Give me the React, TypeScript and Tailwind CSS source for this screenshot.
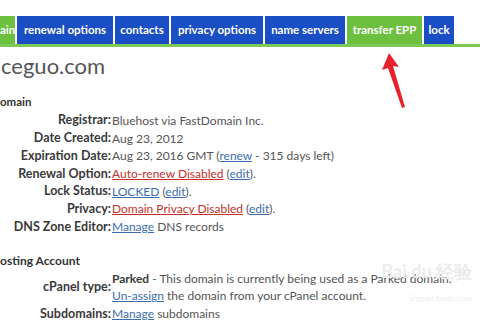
import React from "react";

const tabs: { label: string; green?: boolean; w: string }[] = [
  { label: "ain", green: true, w: "w-[15px]" },
  { label: "renewal options", w: "w-[96px]" },
  { label: "contacts", w: "w-[54px]" },
  { label: "privacy options", w: "w-[92px]" },
  { label: "name servers", w: "w-[80px]" },
  { label: "transfer EPP", green: true, w: "w-[75px]" },
  { label: "lock", w: "w-[30px]" },
];

function Row({ label, children }: { label: string; children: React.ReactNode }) {
  return (
    <div className="flex h-[17.7px] items-center">
      <div className="w-[111px] shrink-0 text-right font-bold text-[#3a3a3a] text-[12.5px]">{label}:</div>
      <div className="pl-[1px] text-[#555] text-[12px] whitespace-nowrap">{children}</div>
    </div>
  );
}

const blueLink = "text-[#3b6db3] underline";
const redLink = "text-[#c9302c] underline";

export default function App() {
  return (
    <div className="relative w-[480px] h-[320px] overflow-hidden bg-white" style={{ fontFamily: "Lato, 'Open Sans', sans-serif" }}>
      <div className="pt-[16px]">
        <div className="flex h-[28px] gap-[2px]">
          {tabs.map((t) => (
            <div
              key={t.label}
              className={`${t.w} shrink-0 flex items-center justify-center overflow-hidden whitespace-nowrap text-white font-bold text-[11.5px] ${t.green ? "bg-[#6cbf3f]" : "bg-[#1a4ec4]"}`}
            >
              {t.label}
            </div>
          ))}
        </div>
        <div className="h-[3px] bg-[#7cc95a]" />
      </div>

      <div className="mt-[4px] ml-[1px] text-[22px] leading-[30px] text-[#555]">ceguo.com</div>
      <div className="mt-[12px] h-[18px] flex items-center font-bold text-[11.5px] text-[#333]">omain</div>
      <div className="mt-[1px]">
        <Row label="Registrar">Bluehost via FastDomain Inc.</Row>
        <Row label="Date Created">Aug 23, 2012</Row>
        <Row label="Expiration Date">
          Aug 23, 2016 GMT (<span className={blueLink}>renew</span> - 315 days left)
        </Row>
        <Row label="Renewal Option">
          <span className={redLink}>Auto-renew Disabled</span> (<span className={blueLink}>edit</span>).
        </Row>
        <Row label="Lock Status">
          <span className={blueLink}>LOCKED</span> (<span className={blueLink}>edit</span>).
        </Row>
        <Row label="Privacy">
          <span className={redLink}>Domain Privacy Disabled</span> (<span className={blueLink}>edit</span>).
        </Row>
        <Row label="DNS Zone Editor">
          <span className={blueLink}>Manage</span> DNS records
        </Row>
      </div>

      <div className="mt-[16px] h-[18px] flex items-center font-bold text-[12px] text-[#333]">osting Account</div>
      <div className="flex items-center">
        <div className="w-[111px] shrink-0 text-right font-bold text-[#3a3a3a] text-[12.5px]">cPanel type:</div>
        <div className="pl-[1px] text-[#555] text-[12px] whitespace-nowrap">
          <div className="h-[17.7px] flex items-center">
            <span className="font-bold text-[#3a3a3a]">Parked</span>&nbsp;- This domain is currently being used as a Parked domain.
          </div>
          <div className="h-[17.7px] flex items-center">
            <span className={blueLink}>Un-assign</span>&nbsp;the domain from your cPanel account.
          </div>
        </div>
      </div>
      <Row label="Subdomains">
        <span className={blueLink}>Manage</span> subdomains
      </Row>

      <div className="absolute right-[8px] top-[262px] text-right text-[#ececec] leading-none pointer-events-none">
        <div className="text-[18px] font-bold">Bai du 经验</div>
        <div className="text-[8px] mt-[14px]">jingyan.baidu.com</div>
      </div>

      <svg className="absolute left-[375px] top-[45px]" width="40" height="66" viewBox="0 0 40 66">
        <path d="M14 8 L7 25 L13 23 L27 63 L30 62 L18 21 L24 22 Z" fill="#e8222a" />
      </svg>
    </div>
  );
}
